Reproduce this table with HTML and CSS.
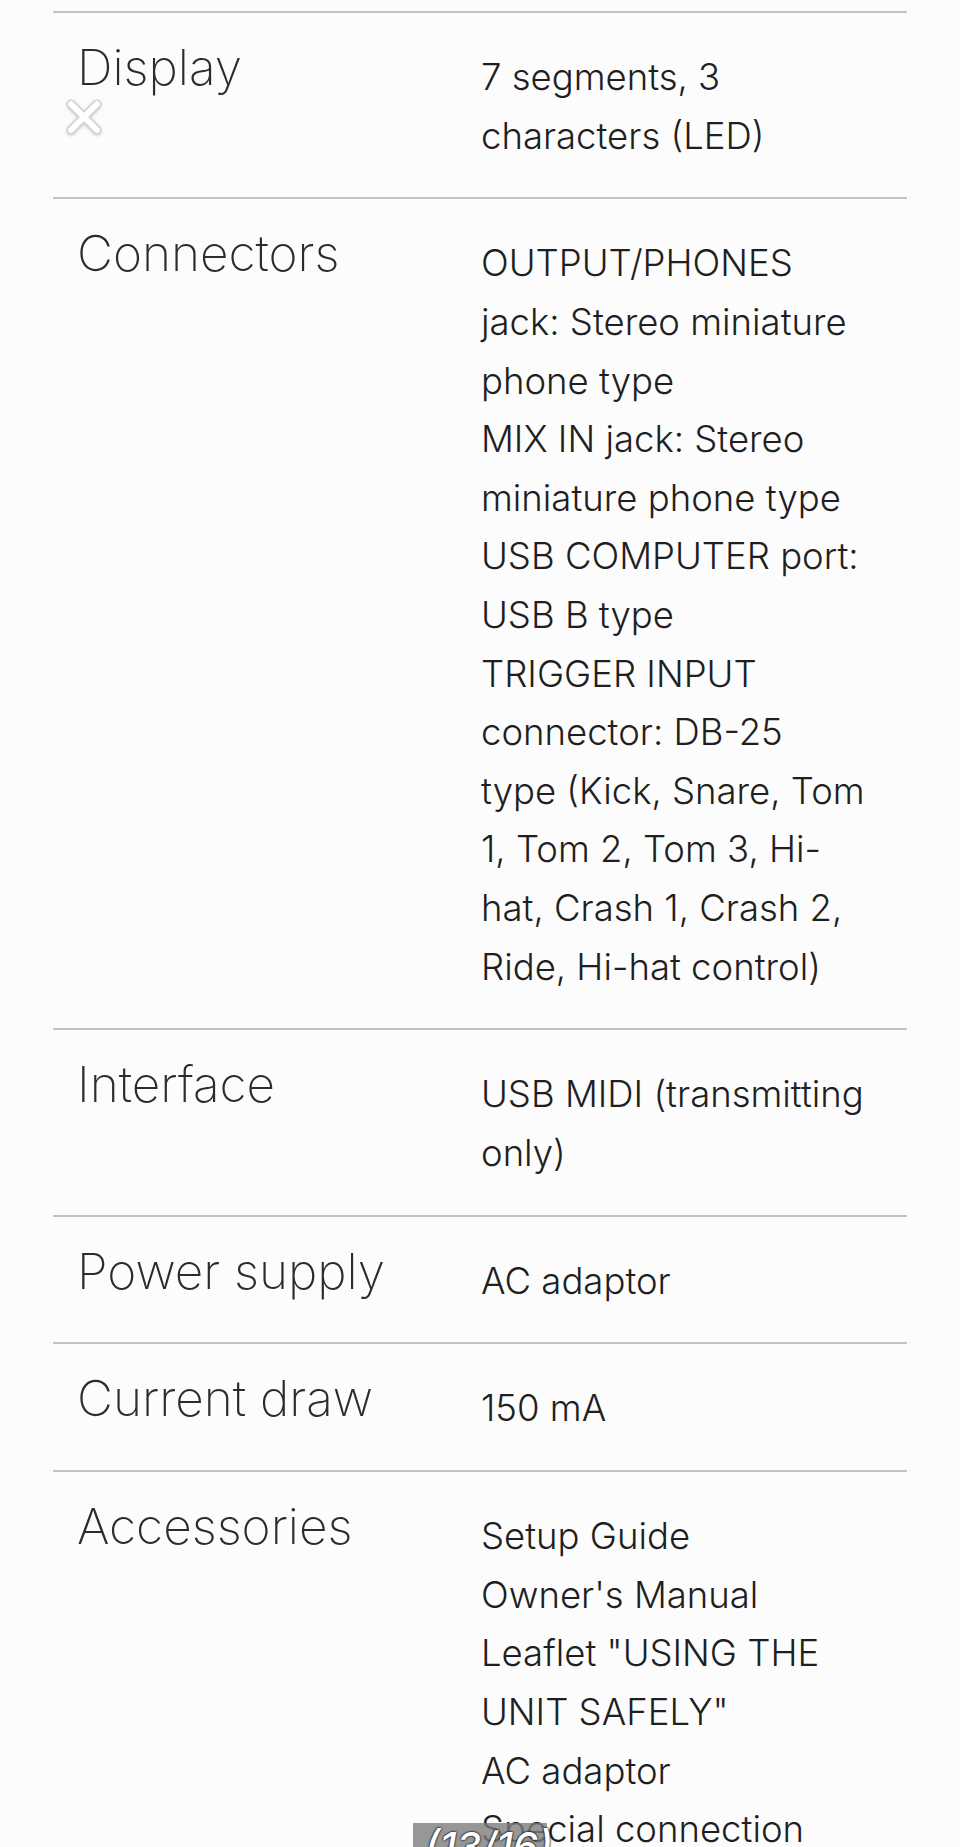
FILE: index.html
```html
<!DOCTYPE html>
<html lang="en">

<head>
  <meta charset="UTF-8">
  <meta name="viewport" content="width=device-width, initial-scale=1.0">
  <title>Specifications</title>
  <link rel="stylesheet" href="styles.css">
</head>

<body>
  <div class="specs">
    <div class="row">
      <div class="label">Display</div>
      <div class="value">7 segments, 3<br>characters (LED)</div>
      <span class="close">
        <svg width="42" height="42" viewBox="0 0 42 42">
          <path d="M8 8 L34 34 M34 8 L8 34" stroke="#d2d2d2" stroke-width="9" stroke-linecap="round" />
          <path d="M8 8 L34 34 M34 8 L8 34" stroke="#ffffff" stroke-width="6" stroke-linecap="round" />
        </svg>
      </span>
    </div>
    <div class="row">
      <div class="label">Connectors</div>
      <div class="value">OUTPUT/PHONES<br>jack: Stereo miniature<br>phone type<br>MIX IN jack: Stereo<br>miniature phone type<br>USB COMPUTER port:<br>USB B type<br>TRIGGER INPUT<br>connector: DB-25<br>type (Kick, Snare, Tom<br>1, Tom 2, Tom 3, Hi-<br>hat, Crash 1, Crash 2,<br>Ride, Hi-hat control)</div>
    </div>
    <div class="row">
      <div class="label">Interface</div>
      <div class="value">USB MIDI (transmitting<br>only)</div>
    </div>
    <div class="row">
      <div class="label">Power supply</div>
      <div class="value">AC adaptor</div>
    </div>
    <div class="row">
      <div class="label">Current draw</div>
      <div class="value">150 mA</div>
    </div>
    <div class="row">
      <div class="label">Accessories</div>
      <div class="value">Setup Guide<br>Owner's Manual<br>Leaflet "USING THE<br>UNIT SAFELY"<br>AC adaptor<br>Special connection<br>cable</div>
    </div>
  </div>

  <div class="caption">(13/16)</div>
</body>

</html>
```

FILE: styles.css
```css
html,
body {
  margin: 0;
  padding: 0;
  background-color: #fcfcfc;
}

body {
  font-family: "Inter", "Liberation Sans", sans-serif;
  color: #1f1f1f;
  height: 1847px;
  overflow: hidden;
  position: relative;
}

.specs {
  margin: 11px 53px 0;
}

.row {
  display: flex;
  align-items: flex-start;
  border-top: 2px solid #c2c2c2;
  position: relative;
}

.label {
  width: 402px;
  padding: 24px 0 0 24px;
  font-size: 49.5px;
  font-weight: 200;
  line-height: 60px;
  color: #2c2c2c;
}

.value {
  padding: 35px 0 32.2px 2px;
  font-size: 36.5px;
  font-weight: 300;
  line-height: 58.6px;
  white-space: nowrap;
}

.close {
  position: absolute;
  left: 10px;
  top: 83px;
  width: 42px;
  height: 42px;
  filter: drop-shadow(0 1px 1.5px rgba(0, 0, 0, .2));
}

.caption {
  position: absolute;
  left: 413px;
  top: 1823px;
  width: 134px;
  height: 48px;
  background-color: rgba(125, 125, 125, .8);
  color: #fff;
  font-size: 40px;
  font-style: italic;
  font-weight: 500;
  line-height: 48px;
  padding-left: 12px;
  box-sizing: border-box;
  text-shadow: 0 0 2px #000, 0 0 2px #000;
}
```
